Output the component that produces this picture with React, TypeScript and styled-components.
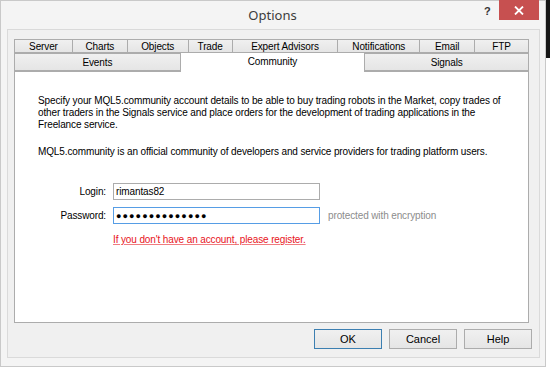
import styled, { createGlobalStyle } from "styled-components";

const GlobalStyle = createGlobalStyle`
  html, body {
    margin: 0;
    padding: 0;
    background: #ffffff;
  }
  body {
    font-family: "Liberation Sans", Arial, sans-serif;
  }
`;

const Desktop = styled.div`
  width: 550px;
  height: 369px;
  background:
    linear-gradient(to right, transparent 546px, #151515 546px) top / 100% 58px no-repeat,
    #ffffff;
  overflow: hidden;
`;

const Window = styled.div`
  width: 544px;
  height: 365px;
  border: 1px solid #c9c9c9;
  background: #f4f4f4;
  display: flex;
  flex-direction: column;
`;

const TitleBar = styled.div`
  height: 28px;
  display: flex;
  align-items: flex-start;
`;

const Title = styled.div`
  flex: 1;
  text-align: center;
  padding-left: 60px;
  padding-top: 5px;
  font-family: "Noto Sans", "Open Sans", sans-serif;
  font-size: 13px;
  color: #3c3c3c;
`;

const HelpMark = styled.div`
  width: 7px;
  margin-top: 4px;
  margin-right: 8px;
  font-family: "Liberation Sans", Arial, sans-serif;
  font-weight: bold;
  font-size: 11px;
  color: #333;
`;

const CloseButton = styled.div`
  width: 40px;
  height: 20px;
  margin-top: -1px;
  margin-right: 6px;
  background: #c75050;
  display: flex;
  align-items: center;
  justify-content: center;
`;

const Client = styled.div`
  flex: 1;
  margin: 0 5px 8px 6px;
  border: 1px solid #dadada;
  background: #f0f0f0;
  padding: 9px 8px 0 6px;
  display: flex;
  flex-direction: column;
  font-size: 10px;
  letter-spacing: -0.12px;
`;

const TabStrip = styled.div`
  width: 515px;
  display: flex;
  flex-direction: column;
`;

const TabRow = styled.div`
  display: flex;
`;

const Tab = styled.div<{ $w: number; $h: number; $active?: boolean }>`
  box-sizing: border-box;
  width: ${({ $w }) => $w + 1}px;
  height: ${({ $h, $active }) => ($active ? $h + 2 : $h)}px;
  margin-left: -1px;
  margin-top: ${({ $active }) => ($active ? "-1px" : "0")};
  margin-bottom: ${({ $active }) => ($active ? "-1px" : "0")};
  border: 1px solid #acacac;
  border-bottom: ${({ $active }) => ($active ? "none" : "1px solid #acacac")};
  background: ${({ $active }) =>
    $active ? "#ffffff" : "linear-gradient(#f0f0f0, #e5e5e5)"};
  position: relative;
  z-index: ${({ $active }) => ($active ? 2 : 1)};
  color: #000;
  display: flex;
  align-items: center;
  justify-content: center;
  padding-top: ${({ $active }) => ($active ? "0" : "1px")};
  padding-bottom: ${({ $active }) => ($active ? "2px" : "0")};
  line-height: 1;
  &:first-child {
    margin-left: 0;
  }
`;

const Panel = styled.div`
  box-sizing: border-box;
  width: 515px;
  height: 252px;
  background: #ffffff;
  border: 1px solid #acacac;
  padding: 23px 16px 0 23px;
  line-height: 12px;
  color: #000;
`;

const Paragraph = styled.p`
  margin: 0 0 15px 0;
`;

const Form = styled.div`
  margin-top: 25px;
  margin-left: -22px;
  display: grid;
  grid-template-columns: 90px auto 1fr;
  column-gap: 7px;
  row-gap: 7px;
  align-items: center;
`;

const Label = styled.div`
  text-align: right;
`;

const Field = styled.div<{ $focus?: boolean }>`
  box-sizing: border-box;
  width: 207px;
  height: 17px;
  border: 1px solid ${({ $focus }) => ($focus ? "#569de5" : "#acacac")};
  background: #fff;
  padding: 0 2px;
  display: flex;
  align-items: center;
`;

const Dots = styled.span`
  font-size: 9px;
  letter-spacing: 1.1px;
  color: #000;
`;

const Hint = styled.div`
  color: #8c8c8c;
  padding-left: 1px;
`;

const RegisterLink = styled.a`
  grid-column: 2 / 4;
  color: #e8141c;
  text-decoration: underline;
  text-decoration-color: #f07d80;
  cursor: pointer;
  margin-top: 3px;
`;

const ButtonRow = styled.div`
  display: flex;
  justify-content: flex-end;
  gap: 7px;
  margin-top: 6px;
  margin-right: -1px;
`;

const Button = styled.div<{ $default?: boolean }>`
  box-sizing: border-box;
  width: 68px;
  height: 20px;
  border: 1px solid ${({ $default }) => ($default ? "#3c7fb1" : "#acacac")};
  background: linear-gradient(#f0f0f0, #e5e5e5);
  display: flex;
  align-items: center;
  justify-content: center;
  font-size: 11px;
  letter-spacing: 0;
  color: #000;
`;

const topTabs = [
  { label: "Server", w: 58 },
  { label: "Charts", w: 55 },
  { label: "Objects", w: 61 },
  { label: "Trade", w: 44 },
  { label: "Expert Advisors", w: 106 },
  { label: "Notifications", w: 82 },
  { label: "Email", w: 55 },
  { label: "FTP", w: 54 },
];

const bottomTabs = [
  { label: "Events", w: 166 },
  { label: "Community", w: 185, active: true },
  { label: "Signals", w: 164 },
];

export default function App() {
  return (
    <Desktop>
      <GlobalStyle />
      <Window>
        <TitleBar>
          <Title>Options</Title>
          <HelpMark>?</HelpMark>
          <CloseButton>
            <svg width="10" height="9" viewBox="0 0 10 9">
              <path d="M1 0.5 L9 8.5 M9 0.5 L1 8.5" stroke="#fff" strokeWidth="1.8" />
            </svg>
          </CloseButton>
        </TitleBar>
        <Client>
          <TabStrip>
            <TabRow>
              {topTabs.map((t) => (
                <Tab key={t.label} $w={t.w} $h={14}>
                  {t.label}
                </Tab>
              ))}
            </TabRow>
            <TabRow>
              {bottomTabs.map((t) => (
                <Tab key={t.label} $w={t.w} $h={18} $active={t.active}>
                  {t.label}
                </Tab>
              ))}
            </TabRow>
          </TabStrip>
          <Panel>
            <Paragraph>
              Specify your MQL5.community account details to be able to buy trading robots in the
              Market, copy trades of other traders in the Signals service and place orders for the
              development of trading applications in the Freelance service.
            </Paragraph>
            <Paragraph>
              MQL5.community is an official community of developers and service providers for
              trading platform users.
            </Paragraph>
            <Form>
              <Label>Login:</Label>
              <Field>rimantas82</Field>
              <div />
              <Label>Password:</Label>
              <Field $focus>
                <Dots>●●●●●●●●●●●●●●</Dots>
              </Field>
              <Hint>protected with encryption</Hint>
              <div />
              <RegisterLink>If you don't have an account, please register.</RegisterLink>
            </Form>
          </Panel>
          <ButtonRow>
            <Button $default>OK</Button>
            <Button>Cancel</Button>
            <Button>Help</Button>
          </ButtonRow>
        </Client>
      </Window>
    </Desktop>
  );
}
